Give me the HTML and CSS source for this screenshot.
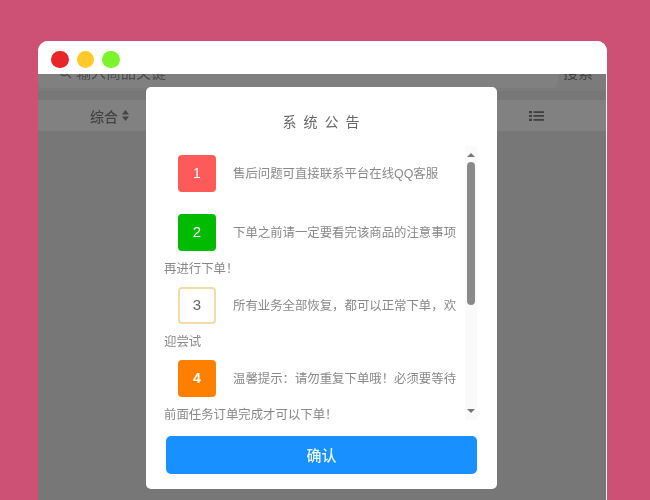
FILE: index.html
```html
<!DOCTYPE html>
<html lang="zh">
<head>
<meta charset="utf-8">
<title>系统公告</title>
<link rel="stylesheet" href="styles.css">
</head>
<body>
<div class="window">
  <div class="titlebar">
    <span class="dot red"></span><span class="dot yellow"></span><span class="dot green"></span>
  </div>
  <div class="page">
    <div class="search-row">
      <div class="search-box">
        <svg class="search-icon" viewBox="0 0 14 14" width="14" height="14"><circle cx="6" cy="6" r="4.5" fill="none" stroke="#4a4a4a" stroke-width="1.3"/><path d="M9.5 9.5 13 13" stroke="#4a4a4a" stroke-width="1.3"/></svg>
        <span>输入商品关键</span>
      </div>
      <span class="search-btn">搜索</span>
    </div>
    <div class="tabs">
      <span class="tab">综合
        <svg class="sort" viewBox="0 0 7 11" width="7" height="11"><path d="M3.5 0 7 4.500H0zM3.500 11 0 6.500h7z" fill="#444"/></svg>
      </span>
      <svg class="list" viewBox="0 0 15 10" width="15" height="10"><path d="M0 0h3v2.200H0zM0 3.900h3v2.200H0zM0 7.800h3v2.200H0zM4.500 .2H15v1.700H4.500zM4.500 4.100H15v1.700H4.500zM4.500 8.100H15v1.700H4.500z" fill="#3f3f3f"/></svg>
    </div>
    <div class="modal">
      <h2 class="modal-title">系统公告</h2>
      <div class="scroller">
        <div class="notices">
          <p class="notice first"><span class="badge b-red">1</span>售后问题可直接联系平台在线QQ客服</p>
          <p class="notice"><span class="badge b-green">2</span>下单之前请一定要看完该商品的注意事项再进行下单！</p>
          <p class="notice"><span class="badge b-white">3</span>所有业务全部恢复，都可以正常下单，欢迎尝试</p>
          <p class="notice"><span class="badge b-orange">4</span>温馨提示：请勿重复下单哦！必须要等待前面任务订单完成才可以下单！</p>
        </div>
        <div class="track">
          <span class="arrow up"></span>
          <span class="thumb"></span>
          <span class="arrow down"></span>
        </div>
      </div>
      <button class="confirm">确认</button>
    </div>
  </div>
</div>
</body>
</html>
```
FILE: styles.css
```css
* { box-sizing: border-box; }
html, body { height: 100%; }
body {
  margin: 0;
  padding: 41px 43px 0 38px;
  background: #cd5175;
  overflow: hidden;
  font-family: "Liberation Sans", "Noto Sans CJK SC", sans-serif;
}
.window {
  width: 569px;
  height: 459px;
  display: flex;
  flex-direction: column;
  border-radius: 10px 10px 0 0;
  overflow: hidden;
  background: #fff;
  filter: blur(0.45px);
}
.titlebar {
  flex: none;
  height: 33px;
  background: #fff;
  display: flex;
  align-items: center;
  gap: 8px;
  padding: 4px 0 0 13px;
}
.dot { width: 17.500px; height: 17.500px; border-radius: 50%; }
.red { background: #e82528; }
.yellow { background: #ffca28; }
.green { background: #7cf42c; }
.page {
  position: relative;
  flex: 1;
  overflow: hidden;
  margin-right: 1px;
  background: #777;
}
.search-row {
  height: 26px;
  margin-top: -9px;
  display: flex;
  align-items: flex-start;
  justify-content: space-between;
  padding-right: 13px;
  background: #7b7b7b;
  color: #4a4a4a;
  font-size: 15px;
  line-height: 15px;
}
.search-box {
  width: 520px;
  height: 23px;
  display: flex;
  align-items: flex-start;
  gap: 4px;
  padding-left: 20px;
  background: #808080;
  border-radius: 0 0 5px 5px;
}
.search-btn { color: #3f3f3f; }
.tabs {
  height: 31px;
  margin-top: 9px;
  display: flex;
  align-items: center;
  justify-content: space-between;
  padding: 0 62px 0 52px;
  background: #818181;
  color: #444;
  font-size: 14px;
  font-weight: 500;
}
.tab { display: inline-flex; align-items: center; gap: 4px; }
.modal {
  position: absolute;
  left: 108px;
  top: 13px;
  width: 351px;
  height: 402px;
  background: #fff;
  border-radius: 5px;
  display: flex;
  flex-direction: column;
  padding: 0 20px 15px 18px;
}
.modal-title {
  margin: 27px 0 15px;
  height: 17px;
  text-align: center;
  padding-left: 8px;
  font-size: 14px;
  line-height: 17px;
  font-weight: 400;
  letter-spacing: 7px;
  color: #666;
}
.scroller {
  display: flex;
  height: 274px;
  overflow: hidden;
  justify-content: space-between;
}
.notices {
  width: 300px;
  padding-top: 10px;
  height: 274px;
  overflow: hidden;
  font-size: 12.400px;
  color: #888;
}
.notice { margin: 0; line-height: 35.800px; }
.notice.first { margin-bottom: 22px; }
.badge {
  display: inline-block;
  vertical-align: middle;
  position: relative;
  top: -1px;
  width: 38px;
  height: 37px;
  line-height: 36px;
  margin: 0 17px 0 14px;
  border-radius: 4px;
  text-align: center;
  font-size: 14px;
  color: #fff;
}
.b-red { background: #ff5a5a; }
.b-green { background: #00bb00; font-size: 15px; }
.b-white { background: #fff; border: 2px solid #f0dcab; color: #666; line-height: 32px; font-size: 15px; }
.b-orange { background: #ff8000; font-weight: 700; }
.track {
  width: 12px;
  height: 274px;
  margin-left: 3px;
  background: #fafafa;
  display: flex;
  flex-direction: column;
  align-items: center;
}
.thumb {
  width: 8px;
  height: 143px;
  margin: 5px 0 104px;
  background: #8a8a8a;
  border-radius: 4px;
}
.arrow { width: 0; height: 0; border-left: 4px solid transparent; border-right: 4px solid transparent; }
.up { margin-top: 7px; border-bottom: 4px solid #777; }
.down { border-top: 4px solid #777; }
.confirm {
  margin: 16px 0 0 2px;
  padding: 0 0 2px;
  height: 38px;
  width: 311px;
  flex: none;
  border: 0;
  border-radius: 5px;
  background: #1890ff;
  color: #eaf4ff;
  font: 500 15px "Liberation Sans", "Noto Sans CJK SC", sans-serif;
}
```
